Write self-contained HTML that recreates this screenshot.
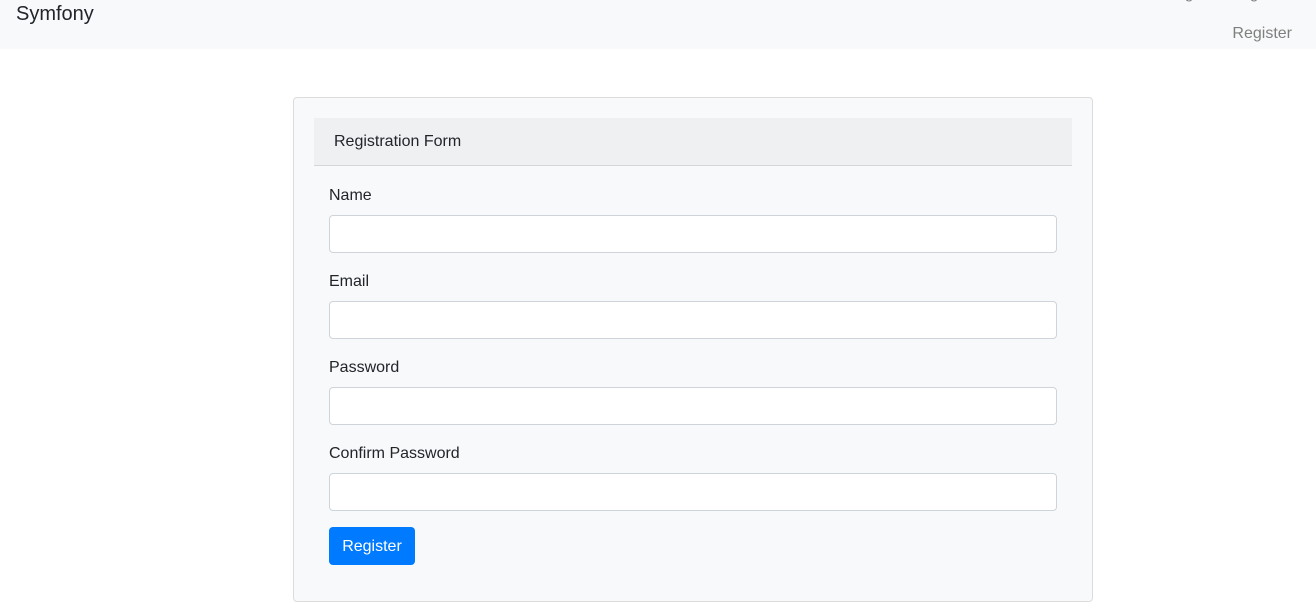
<!DOCTYPE html>
<html><head><style>
body{margin:0;font-family:"Liberation Sans",sans-serif;background:#fff;color:#212529;}
.nav{height:49px;background:#f8f9fa;position:relative;}
.brand{position:absolute;left:16px;top:3px;font-size:20px;}
.reg{position:absolute;right:24px;top:25px;font-size:16px;color:#7f7f7f;}
.top{position:absolute;top:-15px;font-size:16px;color:#7f7f7f;}
.card{position:absolute;left:293px;top:97px;width:798px;height:503px;border:1px solid #dcdcdc;border-radius:4px;background:#f8f9fa;}
.hdr{position:absolute;left:20px;top:20px;width:758px;height:47px;background:#eff0f2;border-bottom:1px solid #d6d6d6;}
.hdr span{position:absolute;left:20px;top:15px;font-size:16px;}
label{position:absolute;left:35px;font-size:16px;}
.in{position:absolute;left:35px;width:726px;height:36px;border:1px solid #ced4da;border-radius:4px;background:#fff;}
.btn{position:absolute;left:35px;top:429px;width:86px;height:38px;background:#007bff;border-radius:4px;color:#fff;font-size:16px;text-align:center;line-height:40px;}
</style></head><body>
<div class="nav"><div class="brand">Symfony</div>
<div class="top" style="right:110px">Login</div><div class="top" style="right:45px">Login</div>
<div class="reg">Register</div></div>
<div class="card">
<div class="hdr"><span>Registration Form</span></div>
<label style="top:89px">Name</label><div class="in" style="top:117px"></div>
<label style="top:175px">Email</label><div class="in" style="top:203px"></div>
<label style="top:261px">Password</label><div class="in" style="top:289px"></div>
<label style="top:347px">Confirm Password</label><div class="in" style="top:375px"></div>
<div class="btn">Register</div>
</div>
</body></html>
